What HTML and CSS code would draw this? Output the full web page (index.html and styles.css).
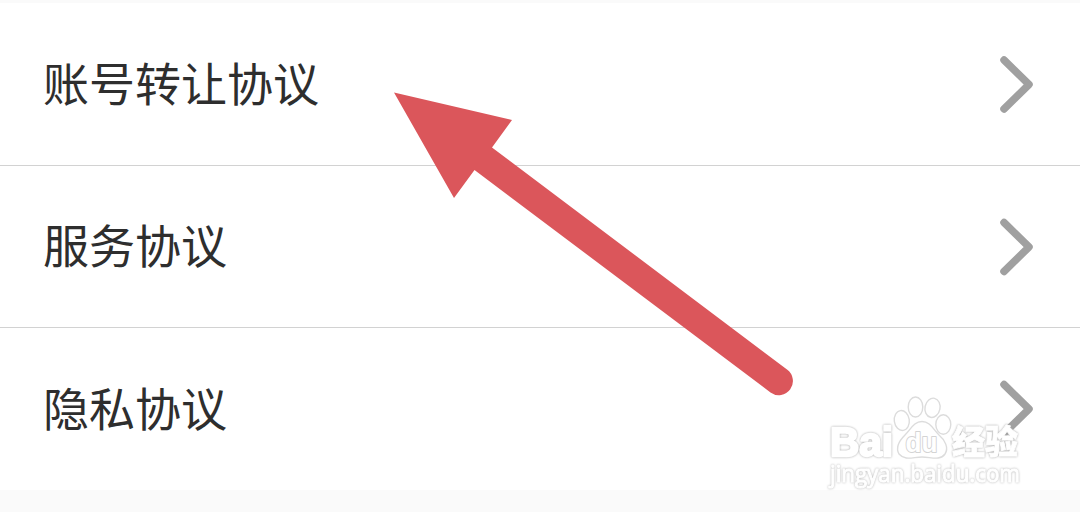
FILE: index.html
```html
<!DOCTYPE html>
<html lang="zh-CN">
<head>
    <meta charset="UTF-8">
    <meta name="viewport" content="width=device-width, initial-scale=1.0">
    <title>协议</title>
    <link rel="stylesheet" href="styles.css">
</head>
<body>
    <div class="list">
        <div class="row">
            <span class="label">账号转让协议</span>
            <svg class="chevron" width="34" height="58" viewBox="0 0 34 58"><path d="M4 5L29 29.500L4 54"/></svg>
        </div>
        <div class="row">
            <span class="label">服务协议</span>
            <svg class="chevron" width="34" height="58" viewBox="0 0 34 58"><path d="M4 4.500L29 29L4 53.500"/></svg>
        </div>
        <div class="row">
            <span class="label">隐私协议</span>
            <svg class="chevron" width="34" height="58" viewBox="0 0 34 58"><path d="M4 4.500L29 29L4 53.500"/></svg>
        </div>
    </div>

    <svg class="arrow" width="400" height="304" viewBox="394 92 400 304">
        <path d="M394 92.500L512 120L492 147.500L787 369.500A14 14 0 0 1 770.500 392.500L474.500 170L454 198Z"/>
    </svg>

    <svg class="watermark" width="210" height="104" viewBox="820 392 210 104">
        <text class="logo" x="830" y="456" font-size="41" textLength="63" lengthAdjust="spacingAndGlyphs">Bai</text>
        <ellipse cx="915.500" cy="407" rx="7.300" ry="10"/>
        <ellipse cx="932.500" cy="407.800" rx="7.500" ry="9.700" transform="rotate(12 932.500 407.800)"/>
        <ellipse cx="901.800" cy="420.500" rx="7.500" ry="10" transform="rotate(-8 901.800 420.500)"/>
        <ellipse cx="943.300" cy="424.500" rx="7.500" ry="9.700"/>
        <path d="M922 421.500C930 421.500 933 429 939 435C945 440 949 448 945 454C940 461 931 457 922 457C913 457 905 461 899 454C895 447 900 440 905 435C911 429 914 421.500 922 421.500Z"/>
        <text class="du" x="905.500" y="452" font-size="28" textLength="32" lengthAdjust="spacingAndGlyphs">du</text>
        <text class="cn" x="952" y="454" font-size="33" textLength="66">经验</text>
        <text class="url" x="830" y="482" font-size="23" textLength="190" lengthAdjust="spacingAndGlyphs">jingyan.baidu.com</text>
    </svg>
</body>
</html>
```
FILE: styles.css
```css
body {
    margin: 0;
    height: 512px;
    padding-top: 3px;
    box-sizing: border-box;
    overflow: hidden;
    position: relative;
    background-color: #fafafa;
    color: #2e2e2e;
    font-family: "Noto Sans CJK SC", sans-serif;
}
.list {
    background-color: #fff;
}
.row {
    display: flex;
    justify-content: space-between;
    align-items: center;
    height: 163px;
    padding: 0 46px 0 43px;
    box-sizing: border-box;
    border-bottom: 1px solid #d2d2d2;
}
.row:nth-child(2) {
    height: 162px;
}
.row:last-child {
    height: 162px;
    border-bottom: none;
}
.label {
    font-size: 46px;
    line-height: 64px;
    padding-bottom: 7px;
}
.chevron {
    fill: none;
    stroke: #a0a0a0;
    stroke-width: 7.5;
    stroke-linecap: round;
    stroke-linejoin: round;
}
.arrow {
    position: absolute;
    left: 394px;
    top: 92px;
    fill: #db565b;
}
.watermark {
    position: absolute;
    left: 820px;
    top: 392px;
    overflow: visible;
    fill: #fff;
    stroke: #dcdcdc;
    stroke-width: 1.4;
}
.watermark text {
    stroke: #fff;
    stroke-linejoin: round;
    paint-order: stroke;
    filter: drop-shadow(0 0 0.8px #a8a8a8);
}
.watermark .logo {
    font-family: "Liberation Sans", sans-serif;
    font-weight: bold;
    stroke-width: 2.5;
}
.watermark .du {
    font-family: "Liberation Sans", sans-serif;
    font-weight: bold;
    stroke: #d4d4d4;
    stroke-width: 2;
    filter: none;
}
.watermark .cn {
    font-family: "Noto Sans CJK SC", sans-serif;
    font-weight: 900;
    stroke-width: 0.8;
}
.watermark .url {
    font-family: "Open Sans", sans-serif;
    font-weight: 400;
    stroke-width: 1;
    filter: drop-shadow(0 0 0.8px #b4b4b4);
}
```
